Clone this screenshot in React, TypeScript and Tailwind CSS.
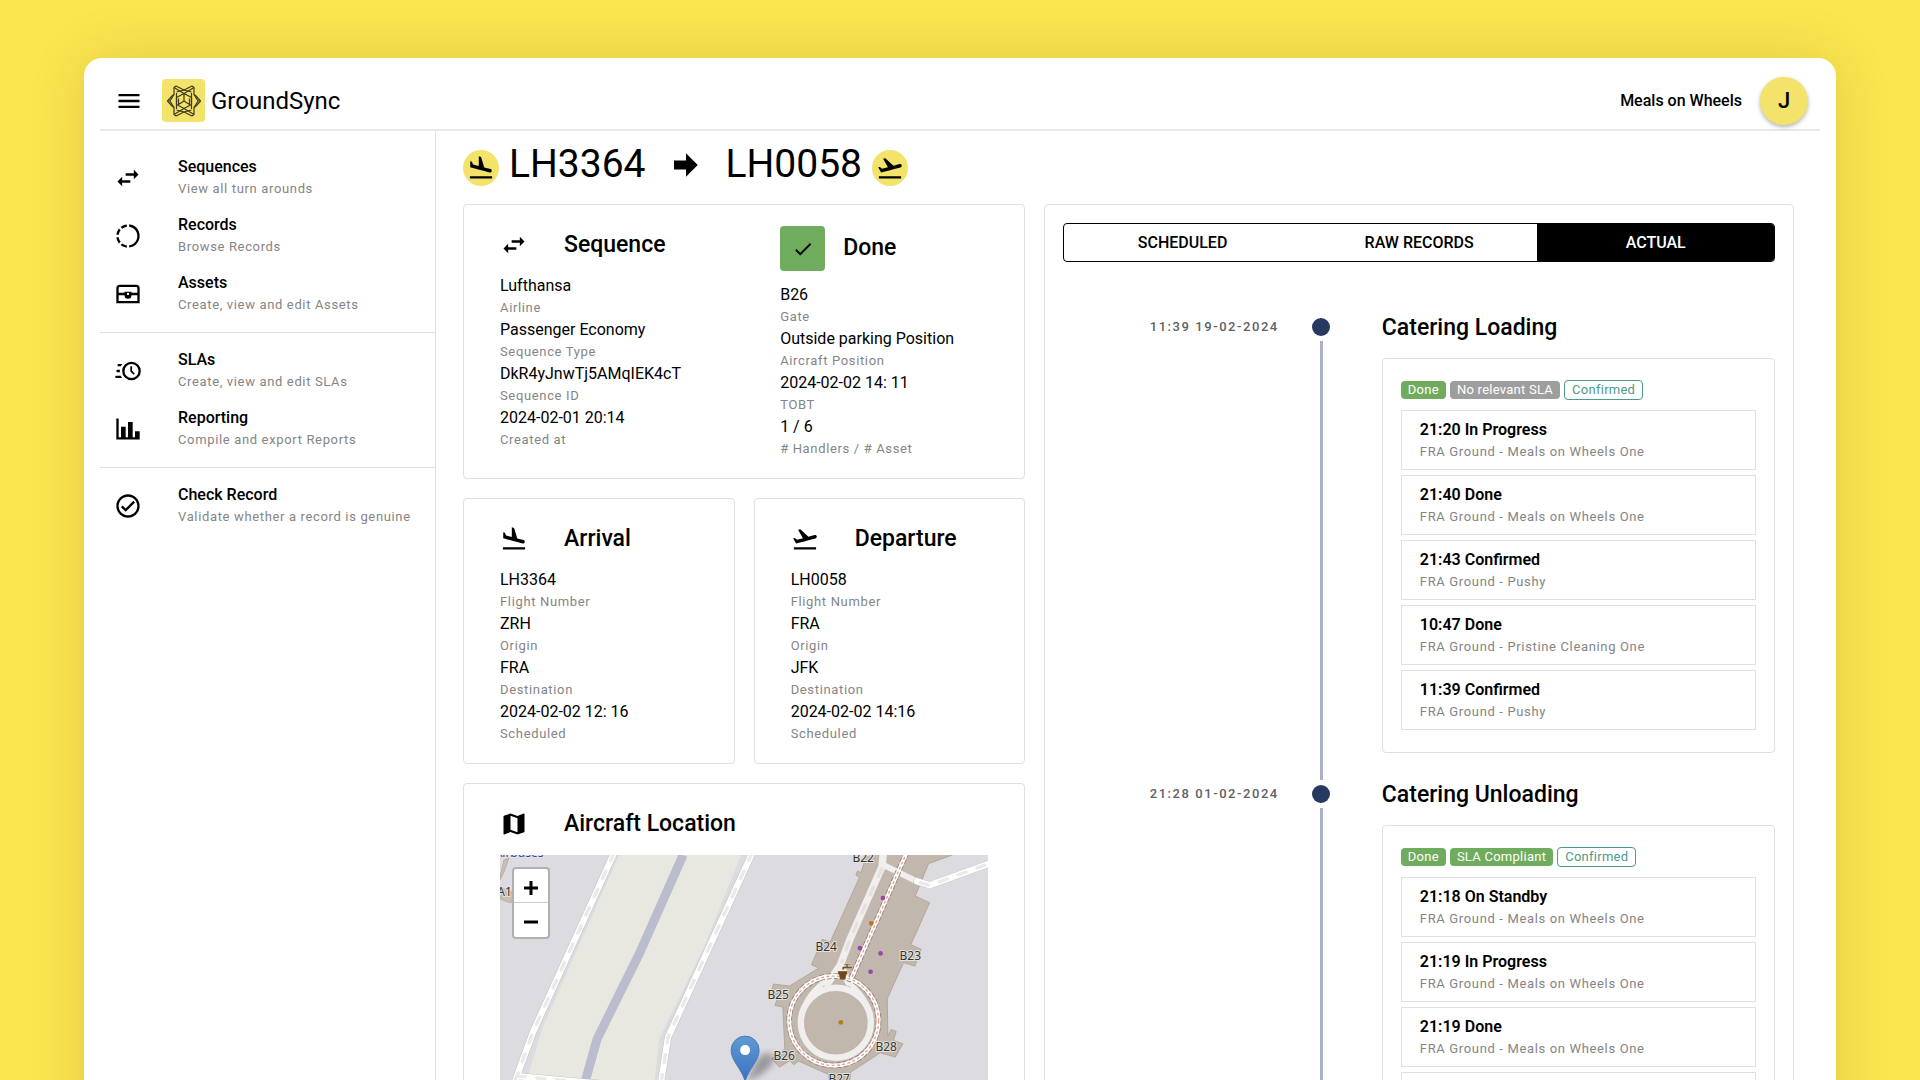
import React from "react";

const ICONS = {
  menu: "M3,6H21V8H3V6M3,11H21V13H3V11M3,16H21V18H3V16Z",
  swap: "M21,9L17,5V8H10V10H17V13M7,11L3,15L7,19V16H14V14H7V11Z",
  landing:
    "M2.5,19H21.5V21H2.5V19M9.68,13.27L14.03,14.43L19.34,15.85C20.14,16.06 20.96,15.59 21.18,14.79C21.39,14 20.92,13.17 20.12,12.95L14.81,11.53L12.05,2.5L10.12,2V10.28L5.15,8.95L4.22,6.63L2.77,6.24V11.41L4.37,11.84L9.68,13.27Z",
  takeoff:
    "M2.5,19H21.5V21H2.5V19M22.07,9.64C21.86,8.84 21.03,8.36 20.23,8.58L14.92,10L8,3.57L6.09,4.08L10.23,11.25L5.26,12.58L3.29,11.04L1.84,11.43L3.66,14.59L4.43,15.92L6.03,15.5L11.34,14.07L15.69,12.91L21,11.5C21.81,11.26 22.28,10.44 22.07,9.64Z",
  map: "M15,19L9,16.89V5L15,7.11M20.5,3C20.44,3 20.39,3 20.34,3L15,5.1L9,3L3.36,4.9C3.15,4.97 3,5.15 3,5.38V20.5A0.5,0.5 0 0,0 3.5,21C3.55,21 3.61,21 3.66,20.97L9,18.9L15,21L20.64,19.1C20.85,19 21,18.85 21,18.62V3.5A0.5,0.5 0 0,0 20.5,3Z",
  chart: "M22,21H2V3H4V19H6V10H10V19H12V6H16V19H18V14H22V21Z",
  clock:
    "M15,4A8,8 0 0,1 23,12A8,8 0 0,1 15,20A8,8 0 0,1 7,12A8,8 0 0,1 15,4M15,6A6,6 0 0,0 9,12A6,6 0 0,0 15,18A6,6 0 0,0 21,12A6,6 0 0,0 15,6M14,8H15.5V11.78L17.83,14.11L16.77,15.17L14,12.4V8M2,18A1,1 0 0,1 1,17A1,1 0 0,1 2,16H5.83C6.14,16.71 6.54,17.38 7,18H2M3,13A1,1 0 0,1 2,12A1,1 0 0,1 3,11H5.05L5,12L5.05,13H3M4,8A1,1 0 0,1 3,7A1,1 0 0,1 4,6H7C6.54,6.62 6.14,7.29 5.83,8H4Z",
  checkCircle:
    "M12 2C6.5 2 2 6.5 2 12S6.5 22 12 22 22 17.5 22 12 17.5 2 12 2M12 20C7.59 20 4 16.41 4 12S7.59 4 12 4 20 7.59 20 12 16.41 20 12 20M16.59 7.58L10 14.17L7.41 11.59L6 13L10 17L18 9L16.59 7.58Z",
  arrow: "M4,15V9H12V4.16L19.84,12L12,19.84V15H4Z",
  check: "M21,7L9,19L3.5,13.5L4.91,12.09L9,16.17L19.59,5.59L21,7Z",
  records:
    "M13,2.05V4.05C17.39,4.59 20.5,8.58 19.96,12.97C19.5,16.61 16.64,19.5 13,19.93V21.93C18.5,21.38 22.5,16.5 21.95,11C21.5,6.25 17.73,2.5 13,2.03V2.05M5.67,19.74C7.18,21 9.04,21.79 11,22V20C9.58,19.82 8.23,19.25 7.1,18.37L5.67,19.74M7.1,5.74C8.22,4.84 9.57,4.26 11,4.06V2.06C9.05,2.25 7.19,3 5.67,4.26L7.1,5.74M5.69,7.1L4.26,5.67C3,7.19 2.25,9.04 2.05,11H4.05C4.24,9.58 4.8,8.23 5.69,7.1M4.06,13H2.06C2.26,14.96 3.03,16.81 4.27,18.33L5.69,16.9C4.81,15.77 4.24,14.42 4.06,13Z",
  chest:
    "M5,4H19A3,3 0 0,1 22,7V20H2V7A3,3 0 0,1 5,4M5,6A1,1 0 0,0 4,7V11H9V10H15V11H20V7A1,1 0 0,0 19,6H5M4,13V18H20V13H15V13A3,3 0 0,1 9,13H4M12,11A1,1 0 0,0 11,12A1,1 0 0,0 12,13A1,1 0 0,0 13,12A1,1 0 0,0 12,11Z",
};
type IconName = keyof typeof ICONS;

function Icon({ name, className = "size-7" }: { name: IconName; className?: string }) {
  return (
    <svg viewBox="0 0 24 24" className={`shrink-0 ${className}`} fill="currentColor" fillRule="evenodd" aria-hidden="true">
      <path d={ICONS[name]} />
    </svg>
  );
}

function Logo() {
  return (
    <span className="flex size-[43px] items-center justify-center rounded bg-[#f4e36a]">
      <svg viewBox="0 0 36 34" className="h-[34px] w-9" fill="none" stroke="#3d3a1e" strokeWidth="1.2" strokeLinejoin="round" aria-hidden="true">
        <path d="M8 3.500l2-1.500 8 4 8-4 2 1.500v7l2 1.500 4.500 5-4.500 5-2 1.500v7l-2 1.500-8-4-8 4-2-1.500v-7l-2-1.500-4.500-5 4.500-5 2-1.500z" />
        <path d="M10.500 9v16M25.500 9v16M8 3.500l10 6 10-6M8 30.500l10-6 10 6" />
        <path d="M10.500 8l7.500-2 7.500 2M10.500 26l7.500 2 7.500-2" />
        <path d="M18 9.500l7.500 4v7l-7.500 4-7.500-4v-7zM18 9.500v7.500M18 17l5.500 3.500v-6M18 17l-5.500 3.500v-6" />
        <path d="M8 10.500l-4 6.500 4 6.500M28 10.500l4 6.500-4 6.500M1.500 17h3M31.500 17h3" />
      </svg>
    </span>
  );
}

type NavEntry = { icon: IconName; title: string; text: string };
const NAV: NavEntry[][] = [
  [
    { icon: "swap", title: "Sequences", text: "View all turn arounds" },
    { icon: "records", title: "Records", text: "Browse Records" },
    { icon: "chest", title: "Assets", text: "Create, view and edit Assets" },
  ],
  [
    { icon: "clock", title: "SLAs", text: "Create, view and edit SLAs" },
    { icon: "chart", title: "Reporting", text: "Compile and export Reports" },
  ],
  [{ icon: "checkCircle", title: "Check Record", text: "Validate whether a record is genuine" }],
];

function Sidebar() {
  return (
    <nav className="w-[336px] shrink-0 border-r border-[#e0e0e0]">
      {NAV.map((group, i) => (
        <ul key={i} className="border-b border-[#e0e0e0] py-[9px] first:pt-[18px] last:border-b-0">
          {group.map((item) => (
            <li key={item.title}>
              <a href="#" className="flex h-[58px] items-center gap-9 pl-[14px]">
                <Icon name={item.icon} />
                <span className="block">
                  <span className="block text-base leading-[22px] font-medium">{item.title}</span>
                  <span className="block text-[13px] leading-[22px] tracking-wider text-[#858585]">{item.text}</span>
                </span>
              </a>
            </li>
          ))}
        </ul>
      ))}
    </nav>
  );
}

function Card({ className = "", children }: { className?: string; children: React.ReactNode }) {
  return <section className={`rounded border border-[#e0e0e0] ${className}`}>{children}</section>;
}

function Heading({ icon, children }: { icon: IconName; children: React.ReactNode }) {
  return (
    <h2 className="flex h-[38px] items-center gap-9 text-[23px] font-medium">
      <Icon name={icon} />
      {children}
    </h2>
  );
}

function Facts({ items }: { items: [string, string][] }) {
  return (
    <dl>
      {items.map(([value, label]) => (
        <div key={label} className="flex flex-col-reverse">
          <dt className="text-[13px] leading-[22px] tracking-wider text-[#858585]">{label}</dt>
          <dd className="text-base leading-[22px]">{value}</dd>
        </div>
      ))}
    </dl>
  );
}

const GATES: [string, number, number][] = [
  ["B22", 363, 7],
  ["B24", 326, 96],
  ["B23", 410, 105],
  ["B25", 278, 144],
  ["B26", 284, 205],
  ["B28", 386, 196],
  ["B27", 339, 228],
];

function AircraftMap() {
  return (
    <div className="relative mt-3 overflow-hidden">
      <svg viewBox="0 0 488 300" className="block w-full" role="img" aria-label="Map of the apron around gates B22 to B28">
        <defs>
          <linearGradient id="pin" x1="0" y1="0" x2="0" y2="1">
            <stop offset="0" stopColor="#5f9bd3" />
            <stop offset="1" stopColor="#3c6fc0" />
          </linearGradient>
          <filter id="soft" x="-50%" y="-50%" width="200%" height="200%">
            <feGaussianBlur stdDeviation="3" />
          </filter>
        </defs>
        <rect width="488" height="300" fill="#dcdbe0" />
        <path d="M119 0H241L203 94 159 184 154 232 147 300H10L29 217 42 174Z" fill="#e8e8e1" />
        <path d="M183 0L140 97 97 184 85 227 68 300" fill="none" stroke="#bbbccd" strokeWidth="9" />
        <path d="M0 22L4 5 9 3 4 17 0 25ZM0 44L3 33 14 38 11 48Z" fill="#c9beb2" stroke="#b0a396" strokeWidth="0.700" />
        <g fill="none" strokeLinejoin="round">
          <g stroke="#c6c5c9" strokeWidth="7.500">
            <path d="M114 -2L57 124 33 177 14 229 0 270" />
            <path d="M17 221L105 229 200 238" />
            <path d="M252 -2L190 134 168 182 161 227 150 300" />
          </g>
          <g stroke="#fff" strokeWidth="6.300">
            <path d="M114 -2L57 124 33 177 14 229 0 270" />
            <path d="M17 221L105 229 200 238" />
            <path d="M252 -2L190 134 168 182 161 227 150 300" />
          </g>
          <g stroke="#eaeaea" strokeWidth="3.500" strokeDasharray="8 12" strokeLinecap="round">
            <path d="M114 -2L57 124 33 177 14 229 0 270" />
            <path d="M17 221L105 229" />
            <path d="M252 -2L190 134 168 182 161 227" />
          </g>
        </g>
        <g transform="translate(240 -13) scale(0.3333)">
          <path
            d="M385 30L370 68 362 92 352 87 347 99 358 106 270 300 246 292 214 368 236 378 148 432 100 426 92 452 112 470 104 490 128 495 134 620 95 650 118 675 150 655 160 668 175 657 265 697 268 740H325L332 690 420 632 465 645 488 605 460 595 468 568 452 562 443 583 441 470 490 362 524 372 543 322 512 308 568 182 525 162 565 65 660 30Z"
            fill="#c2b7ac"
            stroke="#aca093"
            strokeWidth="2.500"
          />
          <g fill="none" strokeLinecap="round" strokeLinejoin="round">
            <path d="M432 70L530 118" stroke="#f0efee" strokeWidth="18" />
            <path d="M530 118L568 130 760 60" stroke="#c6c5c9" strokeWidth="22" />
            <path d="M530 118L568 130 760 60" stroke="#fff" strokeWidth="19" />
            <path d="M540 122L568 130 760 60" stroke="#eaeaea" strokeWidth="10" strokeDasharray="26 34" />
            <path d="M430 30L425 75 330 290 300 370 262 425M300 370L325 420" stroke="#f0efee" strokeWidth="22" />
            <circle cx="287" cy="542" r="105" stroke="#f0efee" strokeWidth="19" />
            <path d="M195 490C210 450 240 430 275 400M380 490C365 450 335 435 310 400" stroke="#f0efee" strokeWidth="15" />
            <path d="M425 80L330 290 305 360" stroke="#e3e2e0" strokeWidth="10" strokeDasharray="26 34" />
            <g strokeLinecap="butt">
              <circle cx="281" cy="536" r="134" stroke="#86817e" strokeWidth="17" strokeDasharray="14 7" />
              <circle cx="281" cy="536" r="134" stroke="#fff" strokeWidth="12" />
              <circle cx="281" cy="536" r="134" stroke="#f29a8c" strokeWidth="4" strokeDasharray="9 7" />
              <path d="M500 30L333 410" stroke="#86817e" strokeWidth="17" strokeDasharray="14 7" />
              <path d="M500 30L333 410" stroke="#fff" strokeWidth="12" />
              <path d="M500 30L333 410" stroke="#f29a8c" strokeWidth="4" strokeDasharray="9 7" />
            </g>
          </g>
          <g fill="#9b44ad">
            <circle cx="428" cy="168" r="7" />
            <circle cx="359" cy="318" r="7" />
            <circle cx="421" cy="334" r="7" />
            <circle cx="391" cy="389" r="7" />
          </g>
          <g fill="#bb7622">
            <circle cx="393" cy="244" r="7" />
            <circle cx="302" cy="541" r="7" />
          </g>
          <path d="M293 387H322V397H319L316 413H299L296 397H293ZM306 383V377Q306 373 311 373H318V369H311V366H330V369H323V373H336V379H312V383Z" fill="#6f4a16" stroke="#fff" strokeWidth="1" />
        </g>
        <g fontFamily="'Noto Sans', sans-serif" fontSize="12" fill="#333" stroke="#e6e2de" strokeWidth="2" paintOrder="stroke" textAnchor="middle">
          {GATES.map(([label, x, y]) => (
            <text key={label} x={x} y={y}>
              {label}
            </text>
          ))}
          <text x="8" y="41">A17</text>
          <text x="19" y="2" fill="#2f3fb5">Airbuses</text>
        </g>
        <path d="M246 226L258 203Q268 194 274 202 273 215 248 226Z" fill="#000" opacity="0.300" filter="url(#soft)" />
        <path d="M245 226C241 213 231 206 231 195A14 14 0 0 1 259 195C259 206 249 213 245 226Z" fill="url(#pin)" stroke="#3a74b4" strokeWidth="0.800" />
        <circle cx="245" cy="195" r="5" fill="#fff" />
      </svg>
      <div className="absolute top-3 left-3 flex w-[38px] flex-col rounded border-2 border-[#b0afb3] bg-white">
        <button type="button" aria-label="Zoom in" className="flex h-[34px] items-center justify-center border-b border-[#ccc] pt-1">
          <svg viewBox="0 0 14 14" className="size-[14px]" stroke="currentColor" strokeWidth="3" aria-hidden="true">
            <path d="M0 7H14M7 0V14" />
          </svg>
        </button>
        <button type="button" aria-label="Zoom out" className="flex h-[34px] items-center justify-center pt-1">
          <svg viewBox="0 0 14 14" className="size-[14px]" stroke="currentColor" strokeWidth="3" aria-hidden="true">
            <path d="M0 7H14" />
          </svg>
        </button>
      </div>
    </div>
  );
}

type Phase = { title: string; time: string; sla: string; compliant: boolean; events: [string, string][] };
const MEALS = "FRA Ground - Meals on Wheels One";
const PHASES: Phase[] = [
  {
    title: "Catering Loading",
    time: "11:39 19-02-2024",
    sla: "No relevant SLA",
    compliant: false,
    events: [
      ["21:20 In Progress", MEALS],
      ["21:40 Done", MEALS],
      ["21:43 Confirmed", "FRA Ground - Pushy"],
      ["10:47 Done", "FRA Ground - Pristine Cleaning One"],
      ["11:39 Confirmed", "FRA Ground - Pushy"],
    ],
  },
  {
    title: "Catering Unloading",
    time: "21:28 01-02-2024",
    sla: "SLA Compliant",
    compliant: true,
    events: [
      ["21:18 On Standby", MEALS],
      ["21:19 In Progress", MEALS],
      ["21:19 Done", MEALS],
      ["21:28 Confirmed", "FRA Ground - Pushy"],
    ],
  },
];

function TimelinePhase({ phase }: { phase: Phase }) {
  return (
    <li className="grid grid-cols-[216fr_85px_412fr]">
      <time className="text-right text-[13px] leading-7 font-medium tracking-[0.12em] text-[#616161]">{phase.time}</time>
      <div className="flex flex-col items-center gap-[5px] pt-[5px]">
        <span className="size-[18px] rounded-full bg-[#263961]" />
        <span className="w-[3px] flex-1 bg-[#a9afc7]" />
      </div>
      <div className="pb-[27px] pl-[18px]">
        <h2 className="text-[23px] leading-[30px] font-medium">{phase.title}</h2>
        <Card className="mt-[15px] px-[18px] pt-[21px] pb-[22px]">
          <div className="flex h-5 items-center gap-1 text-[13px] tracking-[0.02em]">
            <span className="flex h-[18px] items-center rounded bg-[#6fac5d] px-[7px] text-white">Done</span>
            <span className={`flex h-[18px] items-center rounded px-[7px] text-white ${phase.compliant ? "bg-[#6fac5d]" : "bg-[#9e9e9e]"}`}>{phase.sla}</span>
            <span className="flex h-5 items-center rounded border border-[#4d9a8b] px-[7px] text-[#4d9a8b]">Confirmed</span>
          </div>
          <ul className="mt-[10px] flex flex-col gap-[5px]">
            {phase.events.map(([title, place]) => (
              <li key={title} className="border border-[#e0e0e0] px-[18px] pt-2 pb-[6px]">
                <p className="text-base leading-[22px] font-semibold">{title}</p>
                <p className="text-[13px] leading-[22px] tracking-wider text-[#858585]">{place}</p>
              </li>
            ))}
          </ul>
        </Card>
      </div>
    </li>
  );
}

export default function App() {
  return (
    <div className="h-screen overflow-hidden bg-[#fbe64f] px-[84px] pt-[58px] font-['Roboto',sans-serif] text-black">
      <div className="min-h-screen rounded-t-[18px] bg-white px-4 shadow-[0_0_60px_rgba(0,0,0,0.12)]">
        <header className="flex h-[73px] items-center border-b-2 border-[#e8e8e8] pt-[14px] pr-3 pl-[15px]">
          <button type="button" aria-label="Toggle menu">
            <Icon name="menu" />
          </button>
          <a href="#" className="ml-[19px] flex items-center gap-[6px] text-2xl">
            <Logo />
            GroundSync
          </a>
          <span className="ml-auto text-base font-medium">Meals on Wheels</span>
          <button type="button" className="ml-[18px] flex size-12 items-center justify-center rounded-full bg-[#f4e36a] text-[22px] font-medium shadow-[0_2px_4px_rgba(0,0,0,0.3)]">
            J
          </button>
        </header>
        <div className="flex">
          <Sidebar />
          <main className="min-w-0 flex-1 pr-[26px] pl-[27px]">
            <h1 className="flex h-[73px] items-center gap-[10px] text-[39px]">
              <span className="flex size-9 items-center justify-center rounded-full bg-[#f4e36a]">
                <Icon name="landing" />
              </span>
              <span className="flex items-center gap-[22px] pb-[6px]">
                LH3364
                <Icon name="arrow" className="size-9" />
                LH0058
              </span>
              <span className="flex size-9 items-center justify-center rounded-full bg-[#f4e36a]">
                <Icon name="takeoff" />
              </span>
            </h1>
            <div className="grid grid-cols-[3fr_4fr] items-start gap-[19px]">
              <div className="grid grid-cols-2 gap-[19px]">
                <Card className="col-span-2 grid grid-cols-[280fr_208fr] px-9 pt-[21px] pb-[18px]">
                  <div>
                    <Heading icon="swap">Sequence</Heading>
                    <div className="mt-[11px]">
                      <Facts
                        items={[
                          ["Lufthansa", "Airline"],
                          ["Passenger Economy", "Sequence Type"],
                          ["DkR4yJnwTj5AMqIEK4cT", "Sequence ID"],
                          ["2024-02-01 20:14", "Created at"],
                        ]}
                      />
                    </div>
                  </div>
                  <div>
                    <h2 className="flex items-center gap-[18px] text-[23px] font-medium">
                      <span className="flex size-[45px] items-center justify-center rounded bg-[#6fac5d]">
                        <Icon name="check" className="size-[22px]" />
                      </span>
                      Done
                    </h2>
                    <div className="mt-[13px]">
                      <Facts
                        items={[
                          ["B26", "Gate"],
                          ["Outside parking Position", "Aircraft Position"],
                          ["2024-02-02 14: 11", "TOBT"],
                          ["1 / 6", "# Handlers / # Asset"],
                        ]}
                      />
                    </div>
                  </div>
                </Card>
                <Card className="px-9 pt-[21px] pb-[18px]">
                  <Heading icon="landing">Arrival</Heading>
                  <div className="mt-[11px]">
                    <Facts
                      items={[
                        ["LH3364", "Flight Number"],
                        ["ZRH", "Origin"],
                        ["FRA", "Destination"],
                        ["2024-02-02 12: 16", "Scheduled"],
                      ]}
                    />
                  </div>
                </Card>
                <Card className="px-9 pt-[21px] pb-[18px]">
                  <Heading icon="takeoff">Departure</Heading>
                  <div className="mt-[11px]">
                    <Facts
                      items={[
                        ["LH0058", "Flight Number"],
                        ["FRA", "Origin"],
                        ["JFK", "Destination"],
                        ["2024-02-02 14:16", "Scheduled"],
                      ]}
                    />
                  </div>
                </Card>
                <Card className="col-span-2 px-9 pt-[21px] pb-9">
                  <Heading icon="map">Aircraft Location</Heading>
                  <AircraftMap />
                </Card>
              </div>
              <Card className="p-[18px]">
                <div role="tablist" className="grid h-[39px] grid-cols-3 overflow-hidden rounded border border-black text-base font-medium">
                  <button type="button" role="tab" aria-selected="false">SCHEDULED</button>
                  <button type="button" role="tab" aria-selected="false">RAW RECORDS</button>
                  <button type="button" role="tab" aria-selected="true" className="bg-black text-white">ACTUAL</button>
                </div>
                <ol className="mt-[51px]">
                  {PHASES.map((phase) => (
                    <TimelinePhase key={phase.title} phase={phase} />
                  ))}
                </ol>
              </Card>
            </div>
          </main>
        </div>
      </div>
    </div>
  );
}
